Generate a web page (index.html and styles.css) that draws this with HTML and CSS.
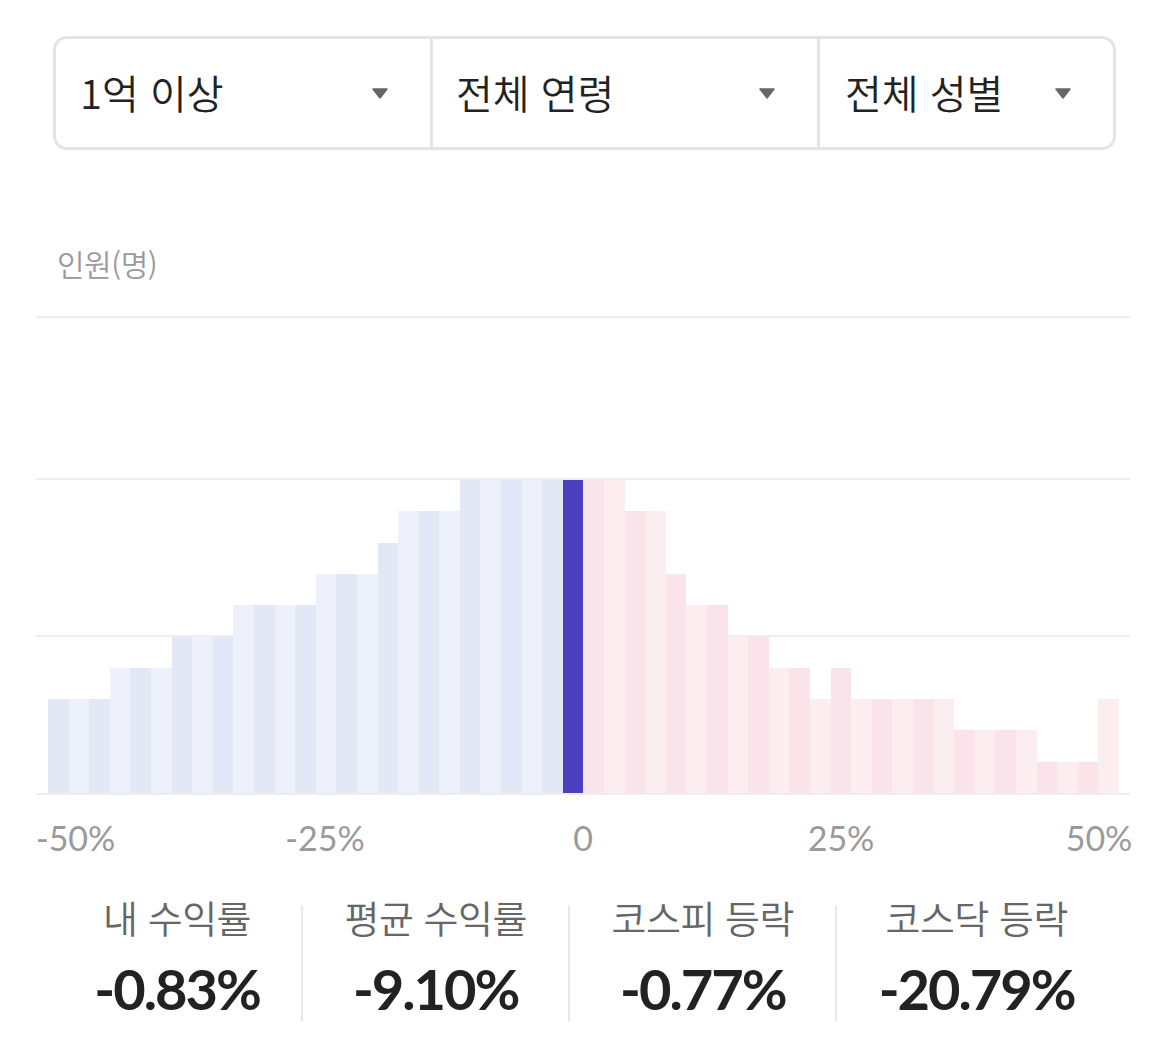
FILE: index.html
```html
<!DOCTYPE html>
<html lang="ko">
<head>
<meta charset="utf-8">
<title>수익률 분포</title>
<link rel="stylesheet" href="styles.css">
</head>
<body>
<div class="page">
  <div class="filters">
    <div class="filter f1"><span class="filter-text">1억 이상</span><svg class="caret" width="16" height="11" viewBox="0 0 16 11"><path d="M1 1h14L8 10z" fill="#666" stroke="#666" stroke-width="1.5" stroke-linejoin="round"/></svg></div>
    <div class="filter f2"><span class="filter-text">전체 연령</span><svg class="caret" width="16" height="11" viewBox="0 0 16 11"><path d="M1 1h14L8 10z" fill="#666" stroke="#666" stroke-width="1.5" stroke-linejoin="round"/></svg></div>
    <div class="filter f3"><span class="filter-text">전체 성별</span><svg class="caret" width="16" height="11" viewBox="0 0 16 11"><path d="M1 1h14L8 10z" fill="#666" stroke="#666" stroke-width="1.5" stroke-linejoin="round"/></svg></div>
  </div>

  <div class="y-label">인원(명)</div>

  <div class="chart">
    <div class="gridlines">
      <div class="gl"></div><div class="gl"></div><div class="gl"></div><div class="gl"></div>
    </div>
    <div class="bars">
      <div class="bar neg" style="--h:3"></div>
      <div class="bar neg alt" style="--h:3"></div>
      <div class="bar neg" style="--h:3"></div>
      <div class="bar neg alt" style="--h:4"></div>
      <div class="bar neg" style="--h:4"></div>
      <div class="bar neg alt" style="--h:4"></div>
      <div class="bar neg" style="--h:5"></div>
      <div class="bar neg alt" style="--h:5"></div>
      <div class="bar neg" style="--h:5"></div>
      <div class="bar neg alt" style="--h:6"></div>
      <div class="bar neg" style="--h:6"></div>
      <div class="bar neg alt" style="--h:6"></div>
      <div class="bar neg" style="--h:6"></div>
      <div class="bar neg alt" style="--h:7"></div>
      <div class="bar neg" style="--h:7"></div>
      <div class="bar neg alt" style="--h:7"></div>
      <div class="bar neg" style="--h:8"></div>
      <div class="bar neg alt" style="--h:9"></div>
      <div class="bar neg" style="--h:9"></div>
      <div class="bar neg alt" style="--h:9"></div>
      <div class="bar neg" style="--h:10"></div>
      <div class="bar neg alt" style="--h:10"></div>
      <div class="bar neg" style="--h:10"></div>
      <div class="bar neg alt" style="--h:10"></div>
      <div class="bar neg" style="--h:10"></div>
      <div class="bar mine" style="--h:10"></div>
      <div class="bar pos" style="--h:10"></div>
      <div class="bar pos alt" style="--h:10"></div>
      <div class="bar pos" style="--h:9"></div>
      <div class="bar pos alt" style="--h:9"></div>
      <div class="bar pos" style="--h:7"></div>
      <div class="bar pos alt" style="--h:6"></div>
      <div class="bar pos" style="--h:6"></div>
      <div class="bar pos alt" style="--h:5"></div>
      <div class="bar pos" style="--h:5"></div>
      <div class="bar pos alt" style="--h:4"></div>
      <div class="bar pos" style="--h:4"></div>
      <div class="bar pos alt" style="--h:3"></div>
      <div class="bar pos" style="--h:4"></div>
      <div class="bar pos alt" style="--h:3"></div>
      <div class="bar pos" style="--h:3"></div>
      <div class="bar pos alt" style="--h:3"></div>
      <div class="bar pos" style="--h:3"></div>
      <div class="bar pos alt" style="--h:3"></div>
      <div class="bar pos" style="--h:2"></div>
      <div class="bar pos alt" style="--h:2"></div>
      <div class="bar pos" style="--h:2"></div>
      <div class="bar pos alt" style="--h:2"></div>
      <div class="bar pos" style="--h:1"></div>
      <div class="bar pos alt" style="--h:1"></div>
      <div class="bar pos" style="--h:1"></div>
      <div class="bar pos alt" style="--h:3"></div>
    </div>
  </div>

  <div class="axis">
    <div class="tick first"><span>-50%</span></div>
    <div class="tick"><span>-25%</span></div>
    <div class="tick"><span>0</span></div>
    <div class="tick"><span>25%</span></div>
    <div class="tick last"><span>50%</span></div>
  </div>

  <div class="stats">
    <div class="stat">
      <div class="stat-label">내 수익률</div>
      <div class="stat-value">-0.83%</div>
    </div>
    <div class="sep"></div>
    <div class="stat">
      <div class="stat-label">평균 수익률</div>
      <div class="stat-value">-9.10%</div>
    </div>
    <div class="sep"></div>
    <div class="stat">
      <div class="stat-label">코스피 등락</div>
      <div class="stat-value">-0.77%</div>
    </div>
    <div class="sep"></div>
    <div class="stat">
      <div class="stat-label">코스닥 등락</div>
      <div class="stat-value">-20.79%</div>
    </div>
  </div>
</div>
</body>
</html>
```

FILE: styles.css
```css
* { box-sizing: border-box; }

html, body {
  margin: 0;
  padding: 0;
  background: #ffffff;
}

body {
  font-family: "Lato", "Noto Sans CJK KR", sans-serif;
  color: #222222;
}

.page {
  width: 1170px;
  height: 1042px;
  overflow: hidden;
}

/* ---------- filters ---------- */
.filters {
  margin: 36px 54px 0 53px;
  height: 114px;
  border: 3px solid #e2e4e8;
  border-radius: 14px;
  display: grid;
  grid-template-columns: 374fr 387fr 296fr;
}

.filter {
  display: flex;
  align-items: center;
  justify-content: space-between;
  padding: 0 42px 0 23px;
}

.filter + .filter {
  border-left: 3px solid #e2e4e8;
}

.f1 { padding-left: 24px; }
.f3 { padding-left: 25px; }

.filter-text {
  font-family: "Noto Sans CJK KR", sans-serif;
  font-size: 40px;
  font-weight: 350;
  letter-spacing: 0;
  line-height: 1;
  color: #222222;
  padding-bottom: 2px;
}

.caret { display: block; flex: none; }

/* ---------- y label ---------- */
.y-label {
  margin: 93px 0 0 57px;
  font-family: "Noto Sans CJK KR", sans-serif;
  font-size: 30px;
  font-weight: 350;
  line-height: 40px;
  letter-spacing: -0.5px;
  color: #9a9a9a;
}

/* ---------- chart ---------- */
.chart {
  margin: 33px 0 0 36px;
  width: 1094px;
  height: 479px;
  display: grid;
}

.gridlines,
.bars {
  grid-area: 1 / 1;
}

.gridlines {
  display: grid;
  grid-template-rows: 2px 160px 2px 155px 2px 156px 2px;
}

.gl {
  height: 2px;
  background: #eeeef1;
}

.gl:nth-child(1) { grid-row: 1; }
.gl:nth-child(2) { grid-row: 3; }
.gl:nth-child(3) { grid-row: 5; }
.gl:nth-child(4) { grid-row: 7; }

.bars {
  display: flex;
  align-items: flex-end;
  padding: 0 11px 2px 12px;
}

.bar {
  flex: 1 1 0;
  height: calc(var(--h) * 31.3px);
}

.bar.neg { background: #e3e8f7; }
.bar.neg.alt { background: #eef0fc; }
.bar.pos { background: #fae3ea; }
.bar.pos.alt { background: #fcedf1; }
.bar.mine { background: #4a3fbd; }

/* ---------- axis ---------- */
.axis {
  margin: 23px 0 0 36px;
  width: 1094px;
  padding: 0 31px;
  display: flex;
  justify-content: space-between;
  font-size: 34px;
  line-height: 40px;
  color: #9a9a9a;
}

.tick {
  width: 0;
  display: flex;
  justify-content: center;
  white-space: nowrap;
}

.tick.first {
  justify-content: flex-start;
  margin-left: -31px;
  width: 31px;
}

/* ---------- stats ---------- */
.stats {
  margin: 39px 54px 0 53px;
  display: flex;
}

.stat {
  flex: 1 1 auto;
  display: flex;
  flex-direction: column;
  align-items: center;
}

.sep {
  flex: none;
  width: 2px;
  margin-top: 8px;
  background: #e6e8eb;
}

.stat-label {
  font-family: "Noto Sans CJK KR", sans-serif;
  font-size: 38px;
  font-weight: 350;
  line-height: 40px;
  letter-spacing: -0.5px;
  color: #666666;
}

.stat-value {
  margin-top: 20px;
  font-size: 56px;
  line-height: 64px;
  font-weight: 700;
  letter-spacing: -2px;
  color: #222222;
}
```
